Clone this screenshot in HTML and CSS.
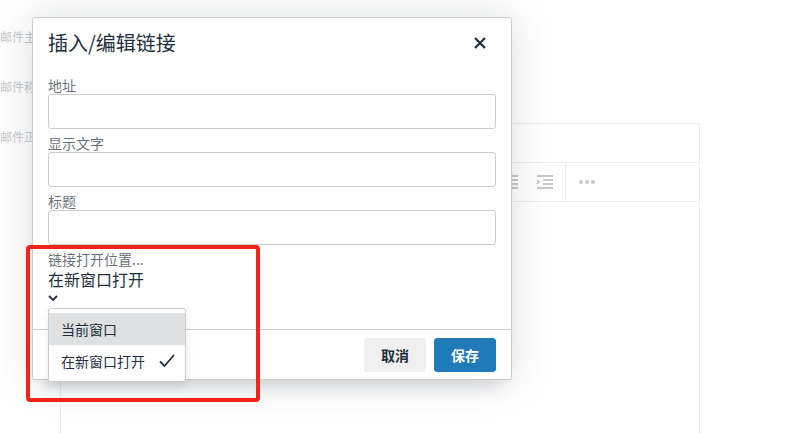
FILE: index.html
```html
<!DOCTYPE html>
<html lang="zh-CN">
<head>
    <meta charset="UTF-8">
    <meta name="viewport" content="width=device-width, initial-scale=1.0">
    <title>插入/编辑链接</title>
    <link rel="stylesheet" href="styles.css">
</head>
<body>

    <div class="page">
        <div class="side-labels">
            <div class="side-label">邮件主题</div>
            <div class="side-label">邮件称呼</div>
            <div class="side-label">邮件正文</div>
        </div>

        <div class="editor">
            <div class="menubar"></div>
            <div class="toolbar">
                <div class="tb-group">
                    <svg class="tb-icon" width="16" height="14" viewBox="0 0 16 14">
                        <rect x="0" y="0" width="16" height="2"/>
                        <rect x="6" y="4" width="10" height="2"/>
                        <rect x="6" y="8" width="10" height="2"/>
                        <rect x="0" y="12" width="16" height="2"/>
                    </svg>
                    <svg class="tb-icon" width="16" height="14" viewBox="0 0 16 14">
                        <rect x="0" y="0" width="16" height="2"/>
                        <rect x="6" y="4" width="10" height="2"/>
                        <rect x="6" y="8" width="10" height="2"/>
                        <rect x="0" y="12" width="16" height="2"/>
                        <path d="M0 4.2 L3.6 7 L0 9.8 Z"/>
                    </svg>
                </div>
                <div class="tb-group">
                    <svg class="tb-icon" width="16" height="4" viewBox="0 0 16 4">
                        <circle cx="2" cy="2" r="2"/>
                        <circle cx="8" cy="2" r="2"/>
                        <circle cx="14" cy="2" r="2"/>
                    </svg>
                </div>
            </div>
        </div>
    </div>

    <div class="dialog">
        <div class="dialog-header">
            <div class="dialog-title">插入/编辑链接</div>
            <button type="button" class="close-btn">
                <svg width="12" height="12" viewBox="0 0 12 12">
                    <path d="M1 1 L11 11 M11 1 L1 11" stroke="#222f3e" stroke-width="2.2"/>
                </svg>
            </button>
        </div>

        <div class="dialog-body">
            <div class="form-group">
                <label for="url">地址</label>
                <input type="text" id="url">
            </div>
            <div class="form-group">
                <label for="text">显示文字</label>
                <input type="text" id="text">
            </div>
            <div class="form-group">
                <label for="title">标题</label>
                <input type="text" id="title">
            </div>
            <div class="target-label">链接打开位置...</div>
            <div class="target-value">在新窗口打开</div>
            <svg class="chevron" width="10" height="7" viewBox="0 0 10 7">
                <path d="M1 1 L5 5 L9 1" fill="none" stroke="#222f3e" stroke-width="1.8"/>
            </svg>
        </div>

        <div class="dialog-footer">
            <button type="button" class="btn btn-cancel">取消</button>
            <button type="button" class="btn btn-save">保存</button>
        </div>
    </div>

    <div class="target-menu">
        <div class="menu-item active">当前窗口</div>
        <div class="menu-item">
            在新窗口打开
            <svg width="16" height="14" viewBox="0 0 16 14">
                <path d="M1 7.5 L5.5 12 L15 1" fill="none" stroke="#222f3e" stroke-width="1.8"/>
            </svg>
        </div>
    </div>

    <div class="highlight-box"></div>

</body>
</html>
```

FILE: styles.css
```css
body {
    margin: 0;
    padding: 0;
    background-color: #fff;
    font-family: "Noto Sans CJK SC", "Liberation Sans", sans-serif;
    color: #222f3e;
    overflow: hidden;
}

/* background page */

.page {
    display: flex;
    height: 433px;
}

.side-labels {
    width: 60px;
    padding-top: 29px;
}

.side-label {
    font-size: 12px;
    line-height: 16px;
    height: 50px;
    color: #c5c9ce;
    white-space: nowrap;
    overflow: hidden;
}

.editor {
    width: 640px;
    margin-top: 123px;
    box-sizing: border-box;
    border: 1px solid #eee;
    border-bottom: none;
}

.menubar {
    height: 38px;
    border-bottom: 1px solid #eee;
}

.toolbar {
    display: flex;
    height: 38px;
    border-bottom: 1px solid #eee;
}

.tb-group {
    display: flex;
    align-items: center;
    justify-content: flex-end;
    gap: 19px;
    padding-right: 12px;
    border-right: 1px solid #eee;
    width: 492px;
}

.tb-group:last-child {
    border-right: none;
    justify-content: flex-start;
    width: auto;
    padding-left: 13px;
}

.tb-icon {
    fill: #c6c9cd;
}

/* dialog */

.dialog {
    position: absolute;
    left: 32px;
    top: 17px;
    width: 480px;
    height: 363px;
    box-sizing: border-box;
    display: flex;
    flex-direction: column;
    background-color: #fff;
    border: 1px solid #ccc;
    border-radius: 3px;
    box-shadow: 0 16px 16px -10px rgba(34, 47, 62, 0.15), 0 0 40px 1px rgba(34, 47, 62, 0.15);
}

.dialog-header {
    display: flex;
    justify-content: space-between;
    align-items: center;
    padding: 12px 15px 0 15px;
    height: 26px;
}

.dialog-title {
    font-size: 20px;
    line-height: 26px;
}

.close-btn {
    background: none;
    border: none;
    padding: 0;
    margin-right: 10px;
    width: 12px;
    height: 12px;
    display: flex;
}

.dialog-body {
    flex: 1;
    padding: 20px 15px 0 15px;
}

.form-group {
    display: flex;
    flex-direction: column;
    margin-bottom: 5px;
}

.form-group label,
.target-label {
    font-size: 14px;
    line-height: 18px;
    color: rgba(34, 47, 62, 0.7);
}

.form-group input {
    height: 35px;
    box-sizing: border-box;
    border: 1px solid #ccc;
    border-radius: 3px;
    padding: 5px 6px;
    font-size: 16px;
}

.target-value {
    font-size: 16px;
    line-height: 20px;
    margin-top: 1px;
}

.chevron {
    display: block;
    margin-top: 6px;
}

.dialog-footer {
    display: flex;
    justify-content: flex-end;
    gap: 8px;
    border-top: 1px solid #ccc;
    padding: 8px 15px 7px 15px;
}

.btn {
    width: 62px;
    height: 34px;
    border-radius: 3px;
    font-family: "Noto Sans CJK SC", "Liberation Sans", sans-serif;
    font-size: 14px;
    font-weight: bold;
    border: 1px solid transparent;
    padding: 0;
}

.btn-cancel {
    background-color: #f0f0f0;
    border-color: #f0f0f0;
    color: #222f3e;
}

.btn-save {
    background-color: #207ab7;
    border-color: #207ab7;
    color: #fff;
}

/* open select menu */

.target-menu {
    position: absolute;
    left: 48px;
    top: 308px;
    width: 138px;
    box-sizing: border-box;
    background-color: #fff;
    border: 1px solid #ccc;
    border-radius: 3px;
    padding: 4px 0;
    box-shadow: 0 4px 8px 0 rgba(34, 47, 62, 0.1);
}

.menu-item {
    display: flex;
    align-items: center;
    justify-content: space-between;
    height: 32px;
    padding: 0 12px;
    font-size: 14px;
    color: #222f3e;
}

.menu-item.active {
    background-color: #dee0e2;
}

.menu-item svg {
    margin-right: -2px;
}

/* annotation */

.highlight-box {
    position: absolute;
    left: 26px;
    top: 245px;
    width: 234px;
    height: 157px;
    box-sizing: border-box;
    border: 4px solid #f5221b;
    border-radius: 4px;
}
```
